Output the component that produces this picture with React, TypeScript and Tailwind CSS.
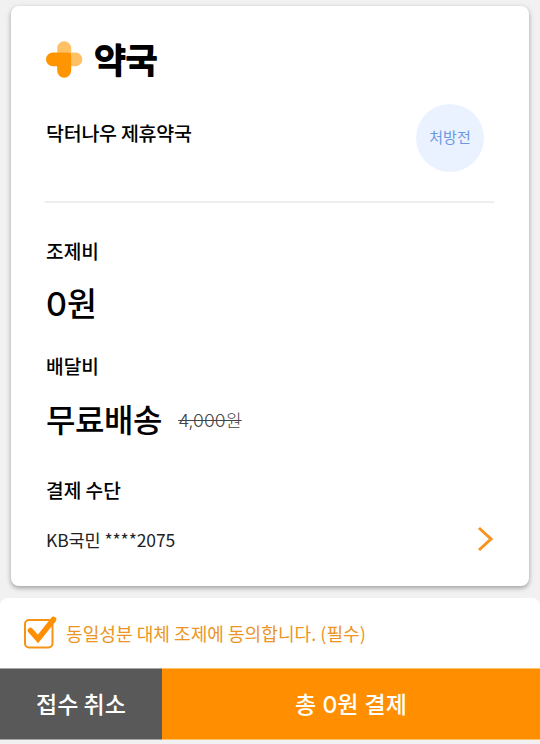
import type { ReactNode } from "react";

const fontStack = "font-['Noto_Sans_CJK_KR',sans-serif]";
const digitStack = "font-['Inter','Noto_Sans_CJK_KR',sans-serif]";

function PlusLogo() {
    return (
        <svg width="38" height="38" viewBox="0 0 38 38" className="shrink-0">
            <path
                d="M12.2 12.5V8.2a7 7 0 0 1 14 0v4.3h4.2a6.9 6.9 0 0 1 0 13.8h-4.2v-13.8z"
                fill="#ffc163"
            />
            <path d="M12.2 12.5h14v13.8h-14z" fill="#ffa726" />
            <path
                d="M7.9 12.5h14.3q4 0 4 4v14.3a7 7 0 0 1-14 0v-4.5H7.9a6.9 6.9 0 0 1 0-13.8z"
                fill="#ff9500"
            />
        </svg>
    );
}

function CheckBox() {
    return (
        <svg width="36" height="36" viewBox="0 0 36 36" className="shrink-0">
            <rect
                x="3"
                y="5"
                width="27.5"
                height="27.5"
                rx="4"
                fill="none"
                stroke="#f69314"
                strokeWidth="2"
            />
            <path
                d="M8.5 15.5l7.5 8.5L31.5 4.5"
                fill="none"
                stroke="#ff8f00"
                strokeWidth="5.6"
                strokeLinecap="round"
            />
        </svg>
    );
}

function Label({ children }: { children: ReactNode }) {
    return (
        <div className="text-[19.2px] leading-7 font-medium">{children}</div>
    );
}

export default function App() {
    return (
        <div
            className={`${fontStack} flex h-[744px] w-[540px] flex-col overflow-hidden bg-[#f1f1f1] text-black`}
        >
            <div className="mx-[11px] mt-[6px] h-[580px] shrink-0 rounded-lg bg-white px-[35px] pt-[33px] shadow-[0_2px_5px_rgba(0,0,0,0.35)]">
                <div className="-ml-px flex h-10 items-center gap-[10px]">
                    <PlusLogo />
                    <h1>
                        <svg
                            width="80"
                            height="60"
                            viewBox="0 0 80 60"
                            className="-my-[10px]"
                        >
                            <text
                                x="1"
                                y="43.5"
                                fontSize="34.5"
                                fontWeight="500"
                                stroke="#000"
                                strokeWidth="1.8"
                                strokeLinejoin="round"
                            >
                                약국
                            </text>
                        </svg>
                    </h1>
                </div>

                <div className="mt-6 flex h-[69px] items-start justify-between pr-[10px]">
                    <div className="mt-4 text-[19.5px] leading-7 font-medium tracking-[-0.25px]">
                        닥터나우 제휴약국
                    </div>
                    <div className="mt-[0.5px] flex size-[68px] items-center justify-center rounded-full bg-[#ebf2ff] text-[15px] text-[#6b98e3]">
                        처방전
                    </div>
                </div>

                <hr className="mt-[29px] -ml-px border-t-2 border-[#eeeeee]" />

                <div className="mt-[34px]">
                    <Label>조제비</Label>
                </div>
                <div
                    className={`${digitStack} mt-5 text-[32.5px] leading-10 font-medium`}
                >
                    0원
                </div>

                <div className="mt-[27px]">
                    <Label>배달비</Label>
                </div>
                <div className="mt-[18px] flex items-center gap-4">
                    <span className="text-[32px] leading-10 font-medium tracking-[-0.4px]">
                        무료배송
                    </span>
                    <span
                        className={`${digitStack} mt-[5px] text-[17.5px] leading-6 font-light text-[#444444] line-through`}
                    >
                        4,000원
                    </span>
                </div>

                <div className="mt-[38px]">
                    <Label>결제 수단</Label>
                </div>
                <div className="mt-5 flex h-[30px] items-center justify-between">
                    <span className="pt-[2px] text-[17.5px] tracking-[-0.1px] text-[#222222]">
                        KB국민 ****2075
                    </span>
                    <svg
                        width="18"
                        height="26"
                        viewBox="0 0 18 26"
                        fill="none"
                        stroke="#f7931e"
                        strokeWidth="3"
                    >
                        <path d="M3 2l12 11L3 24" />
                    </svg>
                </div>
            </div>

            <div className="mt-3 flex h-[70px] shrink-0 items-center gap-2 rounded-t-lg bg-white pl-[22px] text-[#ec9526]">
                <CheckBox />
                <span className="pt-[2px] text-[18.1px]">
                    동일성분 대체 조제에 동의합니다. (필수)
                </span>
            </div>

            <div className="flex h-[72px] shrink-0 text-[23px] font-medium text-white">
                <button className="w-[162px] border-y border-[#a5a5a5] bg-[#595959] pb-[2px]">
                    접수 취소
                </button>
                <button
                    className={`${digitStack} flex-1 border-y border-[#ffc36e] bg-[#ff8f00] pt-[2px]`}
                >
                    총 0원 결제
                </button>
            </div>
        </div>
    );
}
